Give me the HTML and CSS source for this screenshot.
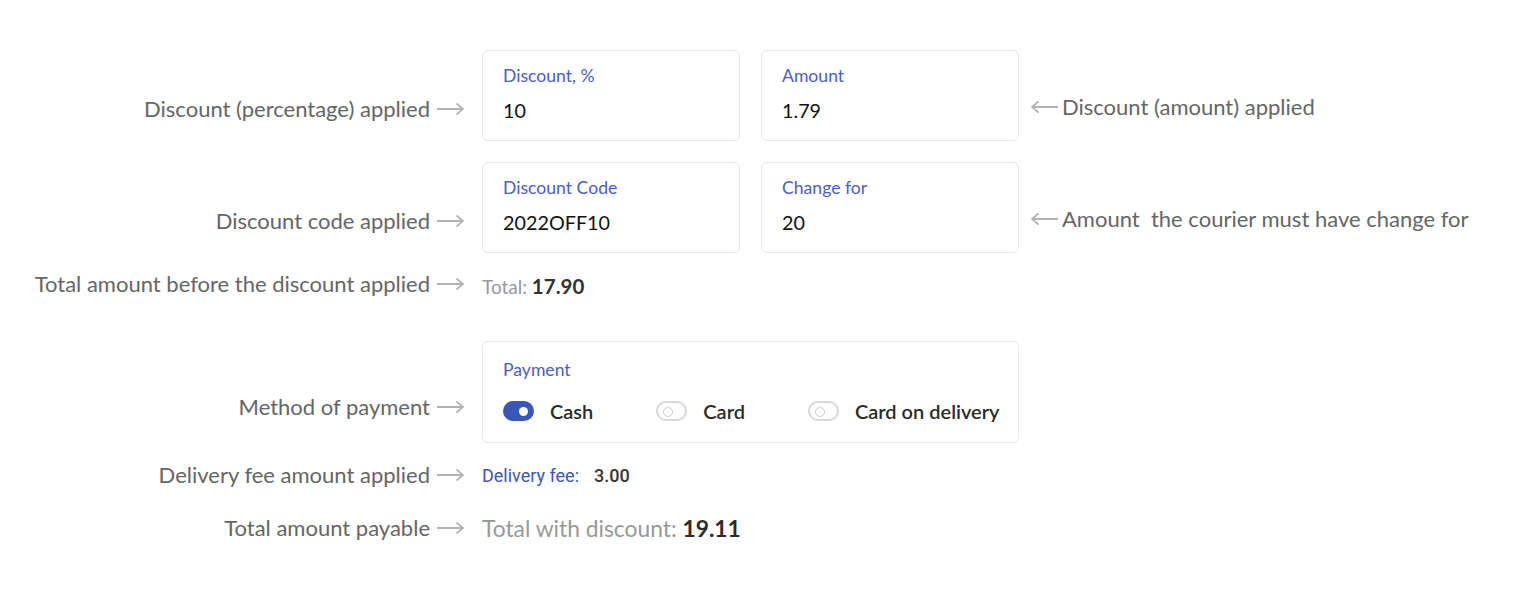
FILE: index.html
```html
<!DOCTYPE html>
<html>
<head>
    <meta name="viewport" content="width=device-width, initial-scale=1.0"/>
    <title>Order summary</title>
    <link rel="stylesheet" href="styles.css">
</head>
<body>
    <div class="sheet">
        <!-- discount percent / amount -->
        <div class="row row-fields">
            <div class="note note-left">
                <span>Discount (percentage) applied</span>
                <svg class="arrow" width="28" height="14" viewBox="0 0 28 14"><path d="M1 7H27M20.5 1.5L27 7L20.5 12.5"/></svg>
            </div>
            <div class="pair">
                <div class="field">
                    <div class="field-label">Discount, %</div>
                    <div class="field-value">10</div>
                </div>
                <div class="field">
                    <div class="field-label">Amount</div>
                    <div class="field-value">1.79</div>
                </div>
            </div>
            <div class="note note-right">
                <svg class="arrow" width="28" height="14" viewBox="0 0 28 14"><path d="M27 7H1M7.5 1.5L1 7L7.5 12.5"/></svg>
                <span>Discount (amount) applied</span>
            </div>
        </div>

        <!-- code / change -->
        <div class="row row-fields row-second">
            <div class="note note-left">
                <span>Discount code applied</span>
                <svg class="arrow" width="28" height="14" viewBox="0 0 28 14"><path d="M1 7H27M20.5 1.5L27 7L20.5 12.5"/></svg>
            </div>
            <div class="pair">
                <div class="field">
                    <div class="field-label">Discount Code</div>
                    <div class="field-value">2022OFF10</div>
                </div>
                <div class="field">
                    <div class="field-label">Change for</div>
                    <div class="field-value">20</div>
                </div>
            </div>
            <div class="note note-right">
                <svg class="arrow" width="28" height="14" viewBox="0 0 28 14"><path d="M27 7H1M7.5 1.5L1 7L7.5 12.5"/></svg>
                <span>Amount&nbsp; the courier must have change for</span>
            </div>
        </div>

        <div class="row row-total">
            <div class="note note-left">
                <span>Total amount before the discount applied</span>
                <svg class="arrow" width="28" height="14" viewBox="0 0 28 14"><path d="M1 7H27M20.5 1.5L27 7L20.5 12.5"/></svg>
            </div>
            <div class="total">Total: <b>17.90</b></div>
        </div>

        <!-- payment method -->
        <div class="row row-payment">
            <div class="note note-left">
                <span>Method of payment</span>
                <svg class="arrow" width="28" height="14" viewBox="0 0 28 14"><path d="M1 7H27M20.5 1.5L27 7L20.5 12.5"/></svg>
            </div>
            <div class="payment">
                <div class="field-label">Payment</div>
                <div class="options">
                    <div class="option"><span class="toggle on"></span>Cash</div>
                    <div class="option"><span class="toggle"></span>Card</div>
                    <div class="option"><span class="toggle"></span>Card on delivery</div>
                </div>
            </div>
        </div>

        <div class="row row-fee">
            <div class="note note-left">
                <span>Delivery fee amount applied</span>
                <svg class="arrow" width="28" height="14" viewBox="0 0 28 14"><path d="M1 7H27M20.5 1.5L27 7L20.5 12.5"/></svg>
            </div>
            <div class="fee"><span class="fee-label">Delivery fee:</span><b>3.00</b></div>
        </div>

        <div class="row row-grand">
            <div class="note note-left">
                <span>Total amount payable</span>
                <svg class="arrow" width="28" height="14" viewBox="0 0 28 14"><path d="M1 7H27M20.5 1.5L27 7L20.5 12.5"/></svg>
            </div>
            <div class="grand">Total with discount: <b>19.11</b></div>
        </div>
    </div><!-- .sheet -->
</body>
</html>
```

FILE: styles.css
```css
* {
    margin: 0;
    padding: 0;
    box-sizing: border-box;
}

body {
    background: #fff;
    font-family: Lato, "Open Sans", sans-serif;
    color: #222;
}

.sheet {
    padding-top: 50px;
}

.row {
    display: grid;
    grid-template-columns: 482px 537px 1fr;
}

.note {
    display: flex;
    align-items: center;
    font-size: 22px;
    line-height: 26px;
    color: #666;
}

.note-left {
    justify-content: flex-end;
    gap: 6px;
    padding-right: 18px;
}

.note-right {
    gap: 3px;
    padding-left: 12px;
}

.arrow {
    flex: none;
    fill: none;
    stroke: #b3b3b3;
    stroke-width: 1.8;
}

/* input-like boxes */
.pair {
    display: flex;
    gap: 21px;
}

.field {
    flex: 1;
    height: 91px;
    padding: 14px 20px 0;
    border: 1px solid #e8e8e8;
    border-radius: 6px;
}

.field-label {
    font-size: 17.6px;
    line-height: 22px;
    color: #4b5ec2;
}

.field-value {
    margin-top: 10px;
    font-size: 19.8px;
    line-height: 26px;
    color: #111;
}

.row-fields .note-left { align-self: end; margin-bottom: 19px; }
.row-fields .note-right { align-self: end; margin-bottom: 21px; }

.row-second { margin-top: 21px; }

.row-total {
    margin-top: 17px;
    height: 28px;
}

.total {
    align-self: center;
    font-size: 19px;
    color: #999;
    padding-top: 3px;
}

.total b {
    font-size: 20.5px;
    color: #333;
}

/* payment */
.row-payment { margin-top: 43px; }

.payment {
    height: 102px;
    padding: 17px 0 0 20px;
    border: 1px solid #e8e8e8;
    border-radius: 6px;
}

.options {
    display: flex;
    gap: 63px;
    margin-top: 17px;
    white-space: nowrap;
}

.option {
    flex: none;
    display: flex;
    align-items: center;
    gap: 16px;
    font-size: 20px;
    line-height: 26px;
    font-weight: 600;
    color: #2b2b2b;
}

.toggle {
    position: relative;
    width: 31px;
    height: 20px;
    border: 2px solid #d9d9d9;
    border-radius: 10px;
}

.toggle::after {
    content: "";
    position: absolute;
    left: 5px;
    top: 4px;
    width: 8px;
    height: 8px;
    border: 1.5px solid #cfcfcf;
    border-radius: 50%;
}

.toggle.on {
    background: #3957b9;
    border-color: #3957b9;
}

.toggle.on::after {
    left: 14px;
    top: 3.5px;
    width: 9px;
    height: 9px;
    border: none;
    background: #fff;
}

.row-payment .note-left { align-self: end; margin-bottom: 23px; }

/* fee and totals */
.row-fee {
    margin-top: 19px;
    height: 24px;
}

.fee {
    align-self: center;
    font-family: Roboto, Arial, sans-serif;
    font-size: 18px;
}

.fee-label {
    color: #3d55c2;
    margin-right: 15px;
}

.fee b {
    font-weight: 500;
    color: #333;
}

.row-grand {
    margin-top: 27px;
    height: 30px;
}

.grand {
    align-self: center;
    font-size: 22.8px;
    color: #999;
}

.grand b {
    color: #2b2b2b;
}
```
